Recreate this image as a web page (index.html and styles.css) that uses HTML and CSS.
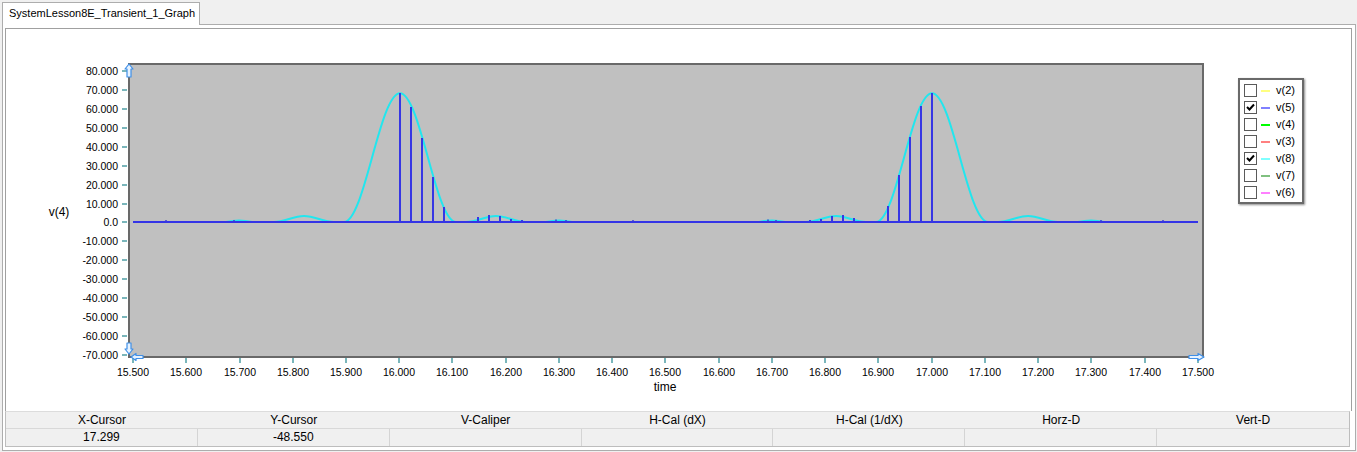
FILE: index.html
```html
<!DOCTYPE html>
<html>
<head>
<meta charset="utf-8">
<title>SystemLesson8E_Transient_1_Graph</title>
<link rel="stylesheet" href="styles.css">
</head>
<body>
<div class="window">
  <div class="tabstrip">
    <div class="tab">SystemLesson8E_Transient_1_Graph</div>
  </div>
  <div class="panel">
    <div class="graph">
      <svg class="chart" viewBox="6 29 1345 381" width="1345" height="381" xmlns="http://www.w3.org/2000/svg">
        <rect class="plot-bg" x="129" y="64" width="1074" height="293"/>

        <g class="ticks">
          <path d="M122 71H127M122 90H127M122 109H127M122 128H127M122 147H127M122 166H127M122 185H127M122 204H127M122 222H127M122 241H127M122 260H127M122 279H127M122 298H127M122 317H127M122 336H127M122 355H127"/>
          <path d="M133 358V363M186 358V363M240 358V363M293 358V363M346 358V363M399 358V363M452 358V363M506 358V363M559 358V363M612 358V363M665 358V363M719 358V363M772 358V363M825 358V363M878 358V363M932 358V363M985 358V363M1038 358V363M1091 358V363M1145 358V363M1198 358V363"/>
        </g>

        <g class="ylabels">
          <text x="118" y="75">80.000</text>
          <text x="118" y="94">70.000</text>
          <text x="118" y="113">60.000</text>
          <text x="118" y="132">50.000</text>
          <text x="118" y="151">40.000</text>
          <text x="118" y="170">30.000</text>
          <text x="118" y="189">20.000</text>
          <text x="118" y="208">10.000</text>
          <text x="118" y="226">0.0</text>
          <text x="118" y="245">-10.000</text>
          <text x="118" y="264">-20.000</text>
          <text x="118" y="283">-30.000</text>
          <text x="118" y="302">-40.000</text>
          <text x="118" y="321">-50.000</text>
          <text x="118" y="340">-60.000</text>
          <text x="118" y="359">-70.000</text>
        </g>

        <g class="xlabels">
          <text x="133" y="376">15.500</text>
          <text x="186" y="376">15.600</text>
          <text x="240" y="376">15.700</text>
          <text x="293" y="376">15.800</text>
          <text x="346" y="376">15.900</text>
          <text x="399" y="376">16.000</text>
          <text x="452" y="376">16.100</text>
          <text x="506" y="376">16.200</text>
          <text x="559" y="376">16.300</text>
          <text x="612" y="376">16.400</text>
          <text x="665" y="376">16.500</text>
          <text x="719" y="376">16.600</text>
          <text x="772" y="376">16.700</text>
          <text x="825" y="376">16.800</text>
          <text x="878" y="376">16.900</text>
          <text x="932" y="376">17.000</text>
          <text x="985" y="376">17.100</text>
          <text x="1038" y="376">17.200</text>
          <text x="1091" y="376">17.300</text>
          <text x="1145" y="376">17.400</text>
          <text x="1198" y="376">17.500</text>
        </g>

        <text class="axis-title" x="665" y="391">time</text>
        <text class="axis-title" x="59" y="216">v(4)</text>

        <path class="trace-cyan" d="M133,222 L226,222 Q239,219 252,222 L274,222 C284.9,222 293.1,216 304,216 C314.9,216 323.1,222 334,222 L344,222 C364.4,222 379.6,93.3 400,93.3 C420.4,93.3 435.6,222 456,222 L466,222 C476.9,222 485.1,216 496,216 C506.9,216 515.1,222 526,222 L546,222 Q559,219 572,222 L759,222 Q772,219 785,222 L806,222 C816.9,222 825.1,216 836,216 C846.9,216 855.1,222 866,222 L876,222 C896.4,222 911.6,93.3 932,93.3 C952.4,93.3 967.6,222 988,222 L998,222 C1008.9,222 1017.1,216 1028,216 C1038.9,216 1047.1,222 1058,222 L1078,222 Q1091,219 1104,222 L1198,222"/>

        <path class="trace-blue" d="M133,222 H1198"/>
        <path class="stems" d="M400,222V93 M411,222V107 M422,222V138 M433,222V177 M444,222V207 M478,222V217 M489,222V215 M500,222V216 M511,222V219 M522,222V220 M810,222V220 M821,222V219 M832,222V216 M843,222V215 M854,222V218 M888,222V206 M899,222V175 M910,222V137 M921,222V106 M932,222V93"/>
        <path class="stems-small" d="M166,222V220 M234,222V220 M556,222V219.5 M566,222V220 M633,222V220 M768,222V219.5 M776,222V220 M1101,222V220 M1163,222V220"/>

        <g class="arrows">
          <path d="M129,64 L133,69 L131,69 L131,77 L127,77 L127,69 L125,69 Z"/>
          <path d="M127,343 L131,343 L131,349 L133,349 L129,354 L125,349 L127,349 Z"/>
          <path d="M131,357 L136,353.5 L136,355.5 L143,355.5 L143,358.5 L136,358.5 L136,360.5 Z"/>
          <path d="M1204,357 L1198,353.5 L1198,355.5 L1189,355.5 L1189,358.5 L1198,358.5 L1198,360.5 Z"/>
        </g>
      </svg>

      <div class="legend">
        <div class="lg-row"><span class="cb"></span><span class="swatch c2"></span><span class="lg-name">v(2)</span></div>
        <div class="lg-row"><span class="cb"><svg viewBox="0 0 11 11" width="11" height="11"><path class="tick-mark" d="M2,5 L4.5,7.5 L9,2.5"/></svg></span><span class="swatch c5"></span><span class="lg-name">v(5)</span></div>
        <div class="lg-row"><span class="cb"></span><span class="swatch c4"></span><span class="lg-name">v(4)</span></div>
        <div class="lg-row"><span class="cb"></span><span class="swatch c3"></span><span class="lg-name">v(3)</span></div>
        <div class="lg-row"><span class="cb"><svg viewBox="0 0 11 11" width="11" height="11"><path class="tick-mark" d="M2,5 L4.5,7.5 L9,2.5"/></svg></span><span class="swatch c8"></span><span class="lg-name">v(8)</span></div>
        <div class="lg-row"><span class="cb"></span><span class="swatch c7"></span><span class="lg-name">v(7)</span></div>
        <div class="lg-row"><span class="cb"></span><span class="swatch c6"></span><span class="lg-name">v(6)</span></div>
      </div>
    </div>

    <div class="cursor-table">
      <div class="row head">
        <div class="cell">X-Cursor</div>
        <div class="cell">Y-Cursor</div>
        <div class="cell">V-Caliper</div>
        <div class="cell">H-Cal (dX)</div>
        <div class="cell">H-Cal (1/dX)</div>
        <div class="cell">Horz-D</div>
        <div class="cell">Vert-D</div>
      </div>
      <div class="row vals">
        <div class="cell">17.299</div>
        <div class="cell">-48.550</div>
        <div class="cell"></div>
        <div class="cell"></div>
        <div class="cell"></div>
        <div class="cell"></div>
        <div class="cell"></div>
      </div>
    </div>
  </div>
</div>
</body>
</html>
```

FILE: styles.css
```css
* { box-sizing: border-box; }

html, body {
  margin: 0;
  padding: 0;
  width: 1357px;
  height: 452px;
  background: #f0f0f0;
  overflow: hidden;
  font-family: "Liberation Sans", Arial, sans-serif;
  color: #000;
}

.window {
  width: 1357px;
  height: 452px;
  display: flex;
  flex-direction: column;
}

.tabstrip {
  height: 24px;
  display: flex;
  align-items: flex-end;
  padding-left: 2px;
}

.tab {
  position: relative;
  z-index: 2;
  width: 198px;
  height: 23px;
  margin-bottom: -1px;
  background: #fff;
  border: 1px solid #adadad;
  border-bottom: none;
  font-size: 11px;
  line-height: 21px;
  padding-left: 6px;
  white-space: nowrap;
}

.panel {
  margin: 0 1px 0 2px;
  height: 427px;
  background: #fff;
  border: 1px solid #adadad;
  padding: 3px 3px 3px 2px;
  display: flex;
  flex-direction: column;
}

.graph {
  position: relative;
  height: 383px;
  border: 1px solid #a0a0a0;
  border-bottom: none;
  background: #fff;
  overflow: hidden;
}

.chart {
  display: block;
}

.plot-bg {
  fill: #c0c0c0;
  stroke: #696969;
  stroke-width: 2;
}

.ticks path {
  stroke: #7ab6bb;
  stroke-width: 2;
  fill: none;
}

.chart text {
  font-family: "Liberation Sans", Arial, sans-serif;
  font-size: 10.5px;
  fill: #000;
}

.ylabels text { text-anchor: end; }
.xlabels text { text-anchor: middle; }

.chart .axis-title {
  font-size: 12px;
  text-anchor: middle;
}

.trace-cyan {
  fill: none;
  stroke: #22e6ee;
  stroke-width: 2;
  stroke-linejoin: round;
}

.trace-blue {
  fill: none;
  stroke: #3434e6;
  stroke-width: 2;
}

.stems {
  fill: none;
  stroke: #3636e4;
  stroke-width: 2;
}

.stems-small {
  fill: none;
  stroke: #3a3ad8;
  stroke-width: 1.5;
}

.arrows path {
  fill: #e6f2ff;
  stroke: #3f8fe8;
  stroke-width: 1.2;
  stroke-linejoin: round;
}

.legend {
  position: absolute;
  left: 1232px;
  top: 49px;
  width: 66px;
  height: 126px;
  background: #fff;
  border: 2px solid #6a6a6a;
  box-shadow: 1px 1px 2px rgba(0, 0, 0, 0.45);
  padding: 2px 0 0 4px;
  display: flex;
  flex-direction: column;
}

.lg-row {
  height: 17px;
  display: flex;
  align-items: center;
}

.cb {
  width: 13px;
  height: 13px;
  border: 1px solid #5a5a5a;
  background: #fff;
  display: flex;
  align-items: center;
  justify-content: center;
  flex: none;
}

.cb svg { display: block; }

.tick-mark {
  fill: none;
  stroke: #000;
  stroke-width: 2;
}

.swatch {
  width: 9px;
  height: 2px;
  margin-left: 4px;
  flex: none;
}

.c2 { background: #ffff80; }
.c5 { background: #8080ff; }
.c4 { background: #00ff00; }
.c3 { background: #ff8080; }
.c8 { background: #80ffff; }
.c7 { background: #80c080; }
.c6 { background: #ff80ff; }

.lg-name {
  margin-left: 6px;
  font-size: 11px;
  line-height: 13px;
  color: #000;
}

.cursor-table {
  height: 36px;
  margin-right: 2px;
  border: 1px solid #bdbdbd;
  border-top-color: #dcdcdc;
  background: #f0f0f0;
  display: flex;
  flex-direction: column;
}

.row {
  display: grid;
  grid-template-columns: repeat(7, 1fr);
  font-size: 12px;
}

.row.head {
  height: 17px;
  border-bottom: 1px solid #d8d8d8;
  line-height: 16px;
}

.row.vals {
  height: 17px;
  line-height: 17px;
}

.cell {
  text-align: center;
  white-space: nowrap;
}

.row.vals .cell {
  border-right: 1px solid #d4d4d4;
}

.row.vals .cell:last-child {
  border-right: none;
}
```
